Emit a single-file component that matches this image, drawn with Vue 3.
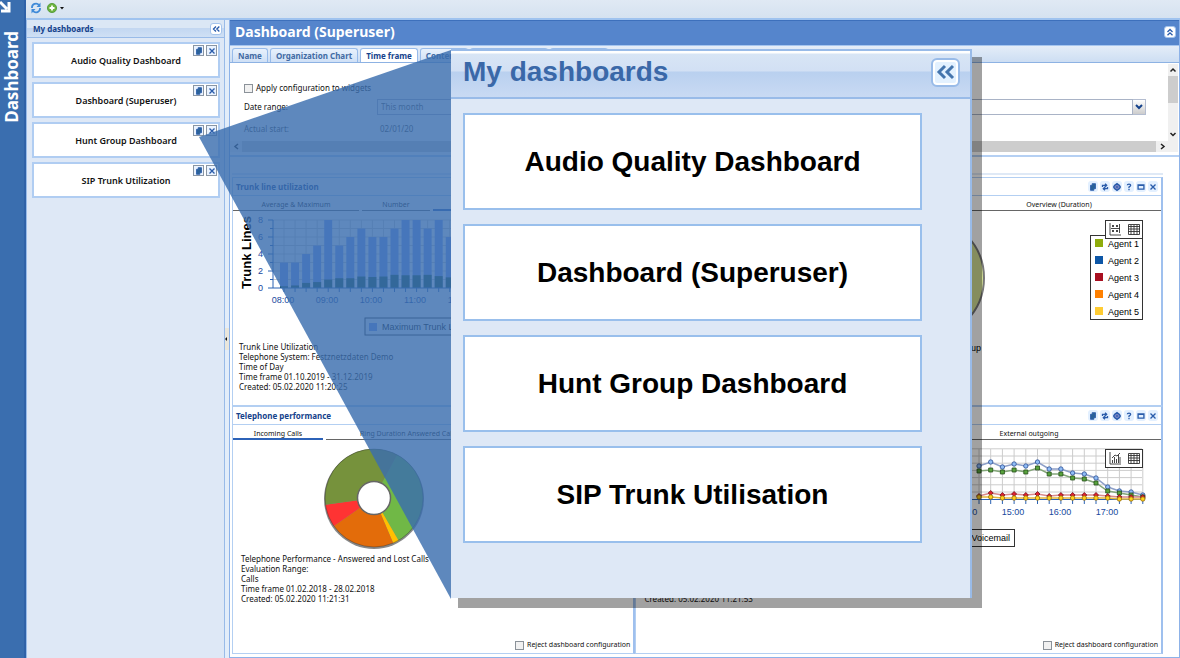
<template>
  <div class="page">
    <nav class="rail">
      <svg class="rail-arrow" width="12" height="14" viewBox="0 0 12 14">
        <path d="M0 2L7 9M9 2V11H1" fill="none" stroke="#fff" stroke-width="3" />
      </svg>
      <span class="rail-title">Dashboard</span>
    </nav>

    <div class="main">
      <header class="toolbar">
        <button class="plain" aria-label="Refresh">
          <svg width="12" height="12" viewBox="0 0 12 12">
            <path d="M2 6A4 4 0 0 1 9 3M10 6A4 4 0 0 1 3 9" fill="none" stroke="#3f8ad8" stroke-width="1.8" />
            <path d="M10.500 .5V5H6.500ZM1.500 11.500V7H5.500Z" fill="#3f8ad8" />
          </svg>
        </button>
        <button class="plain" aria-label="Add">
          <svg width="18" height="12" viewBox="0 0 18 12">
            <circle cx="5" cy="6" r="4.600" fill="#6db33f" stroke="#4a9430" stroke-width=".8" />
            <path d="M5 3.500V8.500M2.500 6H7.500" stroke="#fff" stroke-width="1.800" />
            <path d="M13 5H17L15 7.500Z" fill="#111" />
          </svg>
        </button>
      </header>

      <div class="columns">
        <aside class="side">
          <div class="side-head">
            <span>My dashboards</span>
            <button class="tool" aria-label="Collapse">
              <svg width="10" height="10" viewBox="0 0 12 12"><path :d="icons.collapse" /></svg>
            </button>
          </div>
          <div class="side-list">
            <div v-for="name in dashboards" :key="name" class="card">
              <span>{{ name }}</span>
              <div class="card-tools">
                <button v-for="i in ['copy', 'close']" :key="i" class="mini" :aria-label="i">
                  <svg width="10" height="10" viewBox="0 0 12 12"><path :d="icons[i]" :class="i" /></svg>
                </button>
              </div>
            </div>
          </div>
        </aside>

        <div class="splitter"><span class="grip"></span></div>

        <main class="content">
          <div class="title">
            <h1>Dashboard (Superuser)</h1>
            <button class="tool" aria-label="Collapse settings">
              <svg width="10" height="10" viewBox="0 0 12 12"><path d="M3 6L6 3L9 6M3 10L6 7L9 10" /></svg>
            </button>
          </div>
          <div class="tabs">
            <button v-for="t in tabs" :key="t" class="tab" :class="{ active: t === 'Time frame' }">{{ t }}</button>
            <button class="tab wide" aria-label="More"></button>
            <button class="tab" aria-label="More"></button>
          </div>
          <section class="config">
            <div class="config-body">
              <form class="form">
                <label class="check"><input type="checkbox" />Apply configuration to widgets</label>
                <label for="range">Date range:</label>
                <div class="combo">
                  <select id="range"><option>This month</option></select>
                  <span class="combo-arrow">
                    <svg width="8" height="6" viewBox="0 0 8 6"><path d="M1 1L4 4L7 1" fill="none" stroke="#15428b" stroke-width="2" /></svg>
                  </span>
                </div>
                <span class="muted">Actual start:</span>
                <span class="muted date">02/01/20</span>
              </form>
              <div class="hscroll">
                <svg width="12" height="11" viewBox="0 0 12 11"><path d="M8 3L5 5.500L8 8" /></svg>
                <span class="thumb"></span>
                <svg width="12" height="11" viewBox="0 0 12 11"><path d="M5 3L8 5.500L5 8" /></svg>
              </div>
            </div>
            <div class="vscroll">
              <svg width="10" height="12" viewBox="0 0 10 12"><path d="M2.500 7.500L5 5L7.500 7.500" /></svg>
              <span class="thumb"></span>
              <svg width="10" height="12" viewBox="0 0 10 12"><path d="M2.500 5L5 7.500L7.500 5" /></svg>
            </div>
          </section>

          <div class="board">
            <section class="widget first">
              <div class="widget-head"><h2>Trunk line utilization</h2></div>
              <div class="views">
                <button class="view average">Average &amp; Maximum</button>
                <button class="view number">Number</button>
                <button class="view rest active"></button>
              </div>
              <div class="plot trunk">
                <svg width="400" height="131" viewBox="232 212 400 131">
                  <text class="axis-title" transform="translate(250 290) rotate(-90)">Trunk Lines</text>
                  <path :d="trunkGrid" class="grid" />
                  <g v-for="(v, i) in trunk" :key="i">
                    <rect :x="279 + i * 11.05" :y="289 - v * 8.5" width="8" :height="v * 8.5" fill="#7d9df5" />
                    <rect :x="279 + i * 11.05" :y="289 - trunkLow[i] * 8.5" width="8" :height="trunkLow[i] * 8.5" fill="#12503e" />
                  </g>
                  <path :d="trunkAxis" class="axis" />
                  <text v-for="n in [0, 2, 4, 6, 8]" :key="n" x="262" :y="292 - n * 8.5" class="tick end">{{ n }}</text>
                  <text v-for="(h, i) in ['08:00', '09:00', '10:00', '11:00', '12:00']" :key="h" :x="282 + i * 44" y="304" class="tick mid">{{ h }}</text>
                  <rect x="364" y="319" width="210" height="17" class="box" />
                  <rect x="368" y="324" width="8" height="8" fill="#7d9df5" />
                  <text x="381" y="331" class="legend-text">Maximum Trunk Lines</text>
                </svg>
              </div>
              <p class="info">
                Trunk Line Utilization<br />Telephone System: Festznetzdaten Demo<br />Time of Day<br />Time frame 01.10.2019 - 31.12.2019<br />Created: 05.02.2020 11:20:25
              </p>
            </section>

            <section class="widget first">
              <div class="widget-head right">
                <button v-for="i in widgetTools" :key="i" class="round" :aria-label="i">
                  <svg width="10" height="10" viewBox="0 0 12 12"><path :d="icons[i]" :class="i" /></svg>
                </button>
              </div>
              <div class="views overview">
                <button class="view rest"></button>
                <button class="view duration">Overview (Duration)</button>
              </div>
              <div class="plot agents">
                <svg width="320" height="160" viewBox="840 212 320 160">
                  <circle cx="922" cy="279" r="61" fill="#d3e095" stroke="#777" stroke-width="2" />
                  <text x="980" y="352" class="group end">Group</text>
                  <rect x="1089.500" y="236.500" width="52" height="84" class="box" />
                  <g v-for="(c, i) in agents" :key="c">
                    <rect x="1094" :y="240 + i * 17" width="8" height="8" :fill="c" />
                    <text x="1107" :y="248 + i * 17" class="agent">Agent {{ i + 1 }}</text>
                  </g>
                  <rect x="1104.500" y="221.500" width="37" height="18" class="box" />
                  <path d="M1109 224V236H1120M1111 226L1113 228M1113 226L1111 228M1115 226L1117 228M1117 226L1115 228M1111 231L1113 233M1113 231L1111 233M1115 231L1117 233M1117 231L1115 233M1118.500 225V234M1110 229.500H1119" class="glyph" />
                  <path :d="tableGlyph" class="glyph" />
                </svg>
              </div>
            </section>

            <section class="widget second">
              <div class="widget-head"><h2>Telephone performance</h2></div>
              <div class="views">
                <button class="view incoming active">Incoming Calls</button>
                <button class="view rest ring">Ring Duration Answered Calls</button>
              </div>
              <div class="plot donut">
                <svg width="200" height="114" viewBox="232 441 200 114">
                  <circle cx="373" cy="500" r="50" fill="#555" opacity=".7" />
                  <path v-for="s in slices" :key="s.color" :d="slicePath(s)" :fill="s.color" />
                  <circle cx="373" cy="499" r="49" fill="none" stroke="#222" stroke-opacity=".35" />
                  <circle cx="373" cy="499" r="16.500" fill="#fff" stroke="#666" stroke-width="1.500" />
                </svg>
              </div>
              <p class="info">
                Telephone Performance - Answered and Lost Calls<br />Evaluation Range:<br />Calls<br />Time frame 01.02.2018 - 28.02.2018<br />Created: 05.02.2020 11:21:31
              </p>
              <label class="check reject"><input type="checkbox" />Reject dashboard configuration</label>
            </section>

            <section class="widget second">
              <div class="widget-head right">
                <button v-for="i in widgetTools" :key="i" class="round" :aria-label="i">
                  <svg width="10" height="10" viewBox="0 0 12 12"><path :d="icons[i]" :class="i" /></svg>
                </button>
              </div>
              <div class="views outgoing">
                <button class="view rest"></button>
                <button class="view external">External outgoing</button>
              </div>
              <div class="plot calls">
                <svg width="320" height="114" viewBox="840 441 320 114">
                  <path :d="callGrid" class="grid" />
                  <path :d="callAxis" class="axis" />
                  <g v-for="s in calls" :key="s.color">
                    <polyline :points="s.y.map((y, i) => `${callX(i)},${y}`).join(' ')" fill="none" :stroke="s.line" stroke-width="1.500" />
                    <path v-for="(y, i) in s.y" :key="i" :d="marker(s.shape, callX(i), y)" :fill="s.color" :stroke="s.edge" stroke-width=".8" />
                  </g>
                  <text v-for="(h, i) in ['14:00', '15:00', '16:00', '17:00']" :key="h" :x="965 + i * 47" y="516" class="tick mid">{{ h }}</text>
                  <rect x="940.500" y="530.500" width="73" height="17" class="box" />
                  <text x="1009" y="542" class="legend-text end">Voicemail</text>
                  <rect x="1104.500" y="450.500" width="37" height="18" class="box" />
                  <path d="M1109 453V465H1120M1111.500 464V461M1113.500 464V458M1115.500 464V460M1117.500 464V456M1119 464V458M1111 459L1114 456L1116 457L1119 454" class="glyph" />
                  <path :d="tableGlyph" class="glyph" transform="translate(0 229)" />
                </svg>
              </div>
              <p class="info late">
                Telephone Performance<br />Created: 05.02.2020 11:21:53
              </p>
              <label class="check reject"><input type="checkbox" />Reject dashboard configuration</label>
            </section>
          </div>
        </main>
      </div>
    </div>

    <svg class="beam" width="252" height="550" viewBox="0 0 252 550">
      <path d="M0 88L252 1V550Z" fill="#3a6eaf" fill-opacity=".82" />
    </svg>
    <section class="popup">
      <div class="popup-head">
        <h2>My dashboards</h2>
        <button class="popup-collapse" aria-label="Collapse">
          <svg width="20" height="18" viewBox="0 0 20 18"><path d="M9 3L3 9L9 15M17 3L11 9L17 15" /></svg>
        </button>
      </div>
      <div class="popup-list">
        <div v-for="name in popupNames" :key="name" class="popup-card">{{ name }}</div>
      </div>
    </section>
  </div>
</template>

<script setup>
const dashboards = [
  "Audio Quality Dashboard",
  "Dashboard (Superuser)",
  "Hunt Group Dashboard",
  "SIP Trunk Utilization",
];
const popupNames = [...dashboards.slice(0, 3), "SIP Trunk Utilisation"];
const tabs = ["Name", "Organization Chart", "Time frame", "Contents"];
const widgetTools = ["copy", "refresh", "gear", "help", "window", "close"];
const agents = ["#8fac0c", "#0d56a6", "#a80f20", "#ff8000", "#ffcc33"];

const icons = {
  collapse: "M6 3L3 6L6 9M10 3L7 6L10 9",
  copy: "M5 2H9V8H7V10H3V4H5Z",
  close: "M3 3L9 9M9 3L3 9",
  refresh: "M3 6V4H7M6 2L8 4L6 6M9 6V8H5M6 6L4 8L6 10",
  gear: "M6 2L9 4L10 6L9 8L6 10L3 8L2 6L3 4ZM5 6H7",
  help: "M4 4Q4 2.500 6 2.500Q8 2.500 8 4Q8 5 6 6V7.500M6 8.500V10",
  window: "M2.500 3.500H9.500V8.500H2.500ZM2.500 4H9.500",
};

const trunk = [3, 3, 4, 5, 8, 5, 6, 7, 6, 6, 7, 8, 8, 7, 8, 6, 7, 6];
const trunkLow = [0.2, 0.3, 0.6, 0.7, 1, 1.15, 1.15, 1.35, 1.3, 1.35, 1.55, 1.5, 1.5, 1.55, 1.4, 1.25, 1.2, 1.1];
const range = (n) => [...Array(n).keys()];
const trunkGrid =
  range(8).map((i) => `M272 ${280.5 - i * 8.5}H470`).join("") +
  range(17).map((i) => `M${283 + i * 11.05} 221V289`).join("");
const trunkAxis =
  "M272 221V289H470" +
  range(9).map((i) => `M${i % 2 ? 269 : 267} ${289 - i * 8.5}H272`).join("") +
  range(17).map((i) => `M${283 + i * 11.05} 289V293`).join("");

const callX = (i) => 978 + i * 11.7;
const callGrid =
  range(7).map((i) => `M960 ${493 - i * 7.2}H1141`).join("") +
  range(15).map((i) => `M${callX(i)} 450V500`).join("");
const callAxis = "M960 500.500H1143" + range(15).map((i) => `M${callX(i)} 500V505`).join("");
const tableGlyph =
  "M1127.500 225.500H1138.500V235.500H1127.500ZM1127 227.500H1139M1127 230H1139M1127 232.500H1139M1130 226V236M1133 226V236M1136 226V236";

const calls = [
  {
    color: "#8fbcf5", edge: "#2d4f94", line: "#8d9fc8", shape: "dot",
    y: [467, 463, 468, 465, 467, 463, 470, 470, 474, 475, 479, 488, 492, 493, 496],
  },
  {
    color: "#58a33c", edge: "#274f1c", line: "#83a679", shape: "square",
    y: [472, 471, 473, 471, 473, 469, 475, 475, 479, 480, 484, 492, 494, 496, 498],
  },
  {
    color: "#e02030", edge: "#701018", line: "#d98a8a", shape: "diamond",
    y: [497, 494, 496, 495, 496, 495, 497, 496, 496, 496, 496, 497, 498, 498, 498],
  },
  {
    color: "#ffd21c", edge: "#94680a", line: "#e6b83c", shape: "dot",
    y: [498, 498, 499, 499, 499, 499, 499, 499, 499, 499, 499, 499, 500, 500, 500],
  },
];

function marker(shape, x, y) {
  if (shape === "square") return `M${x - 2} ${y - 2}h4v4h-4z`;
  if (shape === "diamond") return `M${x} ${y - 2.5}l2.5 2.5l-2.5 2.5l-2.5 -2.5z`;
  return `M${x - 2.2} ${y}a2.2 2.2 0 1 0 4.4 0a2.2 2.2 0 1 0 -4.4 0z`;
}

const slices = [
  { from: 28, to: 150, color: "#70b846" },
  { from: 150, to: 157, color: "#ffc000" },
  { from: 157, to: 235, color: "#e36c0a" },
  { from: 235, to: 262, color: "#ff3333" },
  { from: 262, to: 388, color: "#76923c" },
];

// angles run clockwise from twelve o'clock
function slicePath({ from, to }) {
  const at = (a) => {
    const r = (a * Math.PI) / 180;
    return `${373 + 49 * Math.sin(r)} ${499 - 49 * Math.cos(r)}`;
  };
  return `M373 499L${at(from)}A49 49 0 0 1 ${at(to)}Z`;
}
</script>

<style>
body {
  margin: 0;
}
</style>

<style scoped>
* {
  box-sizing: border-box;
}

.page {
  position: relative;
  display: flex;
  min-height: 100vh;
  overflow: hidden;
  font: 8px/10px "Noto Sans", "Open Sans", sans-serif;
  color: #111;
  background: #fff;
}

button {
  font: inherit;
  color: inherit;
  padding: 0;
  border: 0;
  background: none;
}

h1,
h2,
p {
  margin: 0;
}

svg {
  display: block;
  flex: none;
}

.rail {
  width: 26px;
  flex: none;
  background: #3a6eaf;
  border-right: 2px solid #2f62a8;
}

.rail-title {
  display: block;
  margin-top: 17px;
  writing-mode: vertical-rl;
  transform: rotate(180deg);
  font-size: 17px;
  font-weight: 700;
  line-height: 24px;
  color: #fff;
}

.main {
  flex: 1;
  min-width: 0;
  display: flex;
  flex-direction: column;
}

.toolbar {
  height: 20px;
  display: flex;
  align-items: center;
  gap: 5px;
  padding: 0 4px 2px;
  background: linear-gradient(#e0e9f4, #d5e2f0);
  border-bottom: 2px solid #9fc3ef;
}

.columns {
  flex: 1;
  display: flex;
}

.side {
  width: 199px;
  flex: none;
  background: #dee8f6;
  border-left: 1px solid #99bbe8;
  border-right: 1px solid #99bbe8;
}

.side-head {
  height: 18px;
  display: flex;
  align-items: center;
  justify-content: space-between;
  padding: 0 2px 0 6px;
  font-weight: 700;
  color: #15428b;
  background: linear-gradient(#dbe7f5 45%, #c3d7f1 50%, #cfe0f5);
  border-bottom: 1px solid #99bbe8;
}

.tool {
  width: 12px;
  height: 12px;
  display: flex;
  align-items: center;
  justify-content: center;
  border: 1px solid #a5c4ec;
  border-radius: 3px;
  background: #fff;
}

.tool path,
.mini path,
.round path {
  fill: none;
  stroke: #2a5cab;
  stroke-width: 1.6;
}

.mini path.copy,
.round path.copy {
  fill: #2b6299;
  stroke-width: 1;
}

.round path.gear {
  fill: #7a86c4;
}

.side-list {
  display: flex;
  flex-direction: column;
  gap: 4px;
  padding: 4px 4px 4px 5px;
}

.card {
  position: relative;
  height: 36px;
  display: flex;
  align-items: center;
  justify-content: center;
  padding-top: 2px;
  background: #fff;
  border: 2px solid #b0cdf2;
  font-size: 9px;
  font-weight: 600;
}

.card-tools {
  position: absolute;
  top: 1px;
  right: 1px;
  display: flex;
  gap: 2px;
}

.mini {
  width: 11px;
  height: 11px;
  display: flex;
  align-items: center;
  justify-content: center;
  border: 1px solid #8a96a4;
  background: #eaf3ff;
}

.splitter {
  width: 4px;
  display: flex;
  align-items: center;
  background: #e3edf9;
}

.grip {
  width: 4px;
  height: 22px;
  display: flex;
  align-items: center;
  background: #e9e6dc;
}

.grip::before {
  content: "";
  border: 2px solid transparent;
  border-right-color: #111;
  border-left: 0;
}

.content {
  flex: 1;
  min-width: 0;
  display: flex;
  flex-direction: column;
  border: 1px solid #8db2e8;
  border-top: 0;
}

.title {
  height: 25px;
  display: flex;
  align-items: center;
  justify-content: space-between;
  padding: 0 3px 2px 5px;
  background: #5585cc;
  border-top: 1px solid #3d70bc;
}

h1 {
  font-size: 14px;
  line-height: 20px;
  color: #fff;
}

.tabs {
  height: 18px;
  display: flex;
  align-items: flex-end;
  gap: 2px;
  padding: 0 2px;
  background: linear-gradient(#e4edf8, #cddef3);
  border-top: 1px solid #a5c5ef;
  border-bottom: 1px solid #8db2e3;
}

.tab {
  height: 14px;
  min-width: 35px;
  padding: 0 5px;
  font-weight: 700;
  color: #416aa3;
  background: linear-gradient(#e8f1fc, #cfe0f6);
  border: 1px solid #98bbea;
  border-bottom: 0;
  border-radius: 3px 3px 0 0;
}

.tab.active {
  color: #15428b;
  background: #fff;
}

.tab:last-child {
  width: 58px;
}

.tab.wide {
  width: 78px;
}

.config {
  display: flex;
  padding: 1px 0 3px;
  border-bottom: 2px solid #b5d0f3;
}

.config-body {
  flex: 1;
}

.form {
  display: grid;
  grid-template-columns: 133px 1fr;
  row-gap: 6px;
  align-items: center;
  padding: 19px 22px 4px 14px;
}

.check {
  display: flex;
  align-items: center;
  gap: 3px;
}

.form .check {
  grid-column: 1 / -1;
}

.check input {
  appearance: none;
  width: 9px;
  height: 9px;
  margin: 0;
  border: 1px solid #8b9299;
  background: #f1f1f1;
}

.combo {
  display: flex;
  height: 16px;
}

.combo select {
  flex: 1;
  appearance: none;
  font: inherit;
  color: #555;
  padding: 0 3px;
  border: 1px solid #a9b3c6;
  border-radius: 0;
  background: #fff;
}

.combo-arrow {
  width: 13px;
  display: flex;
  align-items: center;
  justify-content: center;
  background: linear-gradient(#fff, #ccc);
  border: 1px solid #b4bdd0;
  border-left: 0;
}

.muted {
  line-height: 16px;
  color: #444;
}

.date {
  padding-left: 3px;
}

.hscroll {
  display: flex;
  background: #f0f0f0;
}

.hscroll .thumb {
  flex: 1;
  background: #cdcdcd;
}

.vscroll {
  width: 10px;
  margin-right: 1px;
  padding-bottom: 12px;
  display: flex;
  flex-direction: column;
  background: #f0f0f0;
}

.vscroll .thumb {
  height: 27px;
  margin-bottom: auto;
  background: #cdcdcd;
}

.hscroll path,
.vscroll path {
  fill: none;
  stroke: #222;
  stroke-width: 1.5;
}

.board {
  flex: 1;
  display: grid;
  grid-template-columns: 403fr 527fr;
  grid-template-rows: 229px 1fr;
  margin: 16px 16px 3px 2px;
  padding-top: 2px;
  border-top: 2px solid #dfe9f6;
}

.widget {
  display: flex;
  flex-direction: column;
  min-width: 0;
  overflow: hidden;
  border: 1px solid #b3cff2;
  border-right: 2px solid #9fc0ee;
}

.widget-head {
  height: 18px;
  flex: none;
  display: flex;
  align-items: center;
  gap: 2px;
  padding: 0 3px;
  border-bottom: 1px solid #b3cff2;
}

.widget-head.right {
  justify-content: flex-end;
}

h2 {
  font-size: 8px;
  line-height: 10px;
  color: #15428b;
}

.round {
  width: 10px;
  height: 11px;
  display: flex;
  align-items: center;
  justify-content: center;
  border-radius: 3px;
  background: #e3f0ff;
}

.views {
  height: 15px;
  flex: none;
  display: flex;
  gap: 3px;
}

.view {
  border-bottom: 1px solid #666;
  font-size: 7px;
  padding-top: 4px;
}

.view.active {
  border-bottom: 2px solid #2c62b8;
}

.average {
  width: 126px;
}

.number {
  width: 68px;
}

.rest {
  flex: 1;
}

.incoming {
  width: 90px;
}

.ring {
  padding-left: 34px;
  text-align: left;
}

.duration {
  width: 204px;
}

.external {
  width: 264px;
}

.views.overview,
.views.outgoing {
  gap: 0;
}

.plot {
  display: flex;
}

.plot.agents,
.plot.calls {
  justify-content: flex-end;
}

.info {
  padding: 0 6px;
}

.second .info {
  padding-left: 8px;
}

.second .info.late {
  padding-top: 30px;
}

.reject {
  margin: auto 3px 3px auto;
  font-size: 7px;
}

.axis-title {
  font: 700 13px "Liberation Sans", Arial, sans-serif;
}

.grid {
  fill: none;
  stroke: #ccc;
}

.axis {
  fill: none;
  stroke: #2b62b3;
}

.tick {
  font: 9px "Liberation Sans", Arial, sans-serif;
  fill: #17479e;
}

.legend-text,
.agent,
.group {
  font: 9px "Liberation Sans", Arial, sans-serif;
}

.mid {
  text-anchor: middle;
}

.end {
  text-anchor: end;
}

.box {
  fill: #fff;
  stroke: #333;
}

.glyph {
  fill: none;
  stroke: #333;
  stroke-width: 0.9;
}

.beam {
  position: absolute;
  left: 199px;
  top: 49px;
}

.popup {
  position: absolute;
  left: 451px;
  top: 49px;
  width: 521px;
  height: 549px;
  background: #dee8f6;
  border-top: 2px solid #99bbe8;
  border-right: 2px solid #99bbe8;
}

/* hard-edged shadow, visible only to the right and below */
.popup::before,
.popup::after {
  content: "";
  position: absolute;
  background: rgba(0, 0, 0, 0.37);
}

.popup::before {
  top: 6px;
  bottom: -10px;
  left: 100%;
  width: 10px;
  margin-left: 2px;
}

.popup::after {
  left: 7px;
  right: -2px;
  top: 100%;
  height: 10px;
}

.popup-head {
  display: flex;
  height: 48px;
  align-items: center;
  justify-content: space-between;
  padding: 0 10px 4px 12px;
  border-bottom: 2px solid #99bbe8;
  background: linear-gradient(#fff 2px, #d8e5f5 3px, #d2e0f4 20px, #b9d0ef 21px, #c9daf3);
}

.popup h2 {
  font: 700 28px/30px "Liberation Sans", Arial, sans-serif;
  color: #3a68a8;
}

.popup-collapse {
  width: 29px;
  height: 29px;
  display: flex;
  align-items: center;
  justify-content: center;
  border: 2px solid #99bbe8;
  border-radius: 6px;
  background: #e3f1ff;
  box-shadow: inset 0 0 0 2px #fff;
}

.popup-collapse path {
  fill: none;
  stroke: #4575ad;
  stroke-width: 3;
}

.popup-list {
  display: flex;
  flex-direction: column;
  gap: 14px;
  padding: 14px 48px 0 12px;
}

.popup-card {
  height: 97px;
  display: flex;
  align-items: center;
  justify-content: center;
  background: #fff;
  border: 2px solid #99bfec;
  font: 700 28px/30px "Liberation Sans", Arial, sans-serif;
  color: #000;
}
</style>
